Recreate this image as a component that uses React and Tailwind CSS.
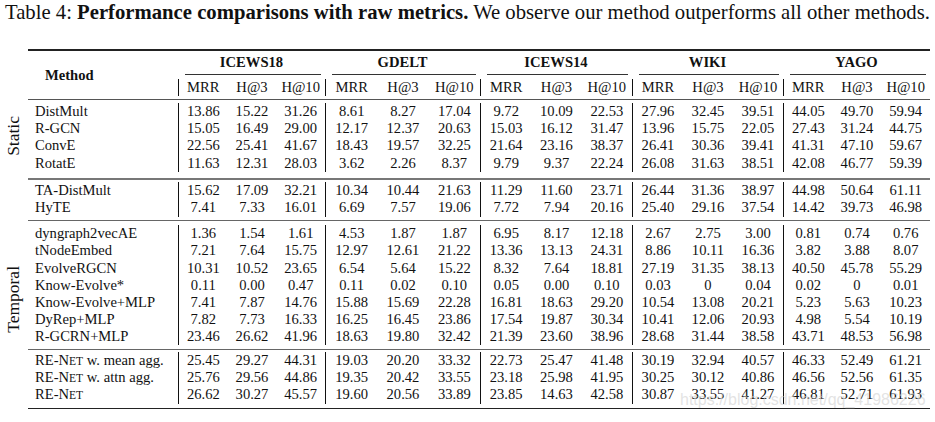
import React from "react"

const groups = [
  { name: "ICEWS18", w: "w-[147px]" },
  { name: "GDELT", w: "w-[155px]" },
  { name: "ICEWS14", w: "w-[152px]" },
  { name: "WIKI", w: "w-[151px]" },
  { name: "YAGO", w: "w-[147px]" },
]

const staticRows = [
  ["DistMult", "13.86 15.22 31.26 8.61 8.27 17.04 9.72 10.09 22.53 27.96 32.45 39.51 44.05 49.70 59.94"],
  ["R-GCN", "15.05 16.49 29.00 12.17 12.37 20.63 15.03 16.12 31.47 13.96 15.75 22.05 27.43 31.24 44.75"],
  ["ConvE", "22.56 25.41 41.67 18.43 19.57 32.25 21.64 23.16 38.37 26.41 30.36 39.41 41.31 47.10 59.67"],
  ["RotatE", "11.63 12.31 28.03 3.62 2.26 8.37 9.79 9.37 22.24 26.08 31.63 38.51 42.08 46.77 59.39"],
]

const taRows = [
  ["TA-DistMult", "15.62 17.09 32.21 10.34 10.44 21.63 11.29 11.60 23.71 26.44 31.36 38.97 44.98 50.64 61.11"],
  ["HyTE", "7.41 7.33 16.01 6.69 7.57 19.06 7.72 7.94 20.16 25.40 29.16 37.54 14.42 39.73 46.98"],
]

const temporalRows = [
  ["dyngraph2vecAE", "1.36 1.54 1.61 4.53 1.87 1.87 6.95 8.17 12.18 2.67 2.75 3.00 0.81 0.74 0.76"],
  ["tNodeEmbed", "7.21 7.64 15.75 12.97 12.61 21.22 13.36 13.13 24.31 8.86 10.11 16.36 3.82 3.88 8.07"],
  ["EvolveRGCN", "10.31 10.52 23.65 6.54 5.64 15.22 8.32 7.64 18.81 27.19 31.35 38.13 40.50 45.78 55.29"],
  ["Know-Evolve*", "0.11 0.00 0.47 0.11 0.02 0.10 0.05 0.00 0.10 0.03 0 0.04 0.02 0 0.01"],
  ["Know-Evolve+MLP", "7.41 7.87 14.76 15.88 15.69 22.28 16.81 18.63 29.20 10.54 13.08 20.21 5.23 5.63 10.23"],
  ["DyRep+MLP", "7.82 7.73 16.33 16.25 16.45 23.86 17.54 19.87 30.34 10.41 12.06 20.93 4.98 5.54 10.19"],
  ["R-GCRN+MLP", "23.46 26.62 41.96 18.63 19.80 32.42 21.39 23.60 38.96 28.68 31.44 38.58 43.71 48.53 56.98"],
]

const ReNet = () => (
  <>
    RE-N<span className="text-[11.5px]">ET</span>
  </>
)

const oursRows = [
  [<><ReNet /> w. mean agg.</>, "25.45 29.27 44.31 19.03 20.20 33.32 22.73 25.47 41.48 30.19 32.94 40.57 46.33 52.49 61.21"],
  [<><ReNet /> w. attn agg.</>, "25.76 29.56 44.86 19.35 20.42 33.55 23.18 25.98 41.95 30.25 30.12 40.86 46.56 52.56 61.35"],
  [<ReNet />, "26.62 30.27 45.57 19.60 20.56 33.89 23.85 14.63 42.58 30.87 33.55 41.27 46.81 52.71 61.93"],
]

function Row({ name, values }) {
  const nums = values.split(" ")
  return (
    <div className="flex h-[17.2px] leading-[17.2px]">
      <div className="w-[150px] pl-[7px] whitespace-nowrap">{name}</div>
      {groups.map((g, gi) => (
        <div key={g.name} className={`${g.w} flex border-l border-[#111]`}>
          {nums.slice(gi * 3, gi * 3 + 3).map((n, i) => (
            <div key={i} className="flex-1 text-center">{n}</div>
          ))}
        </div>
      ))}
    </div>
  )
}

function Section({ rows, className }) {
  return (
    <div className={className}>
      {rows.map((r, i) => (
        <Row key={i} name={r[0]} values={r[1]} />
      ))}
    </div>
  )
}

export default function App() {
  return (
    <div className="w-[935px] h-[422px] bg-white text-[#111] overflow-hidden relative [font-family:'Liberation_Serif','Times_New_Roman',serif]">
      <div className="h-[49px] pl-[5px] pt-[1px] text-[20.7px] leading-[23px] whitespace-nowrap">
        Table 4: <span className="font-bold">Performance comparisons with raw metrics.</span> We observe our method
        outperforms all other methods.
      </div>

      <div className="text-[14.6px]">
        {/* header */}
        <div className="flex">
          <div className="w-[28px]" />
          <div className="w-[902px]">
            <div className="h-[1.5px] bg-[#222]" />
            <div className="flex">
              <div className="w-[150px] pl-[17px] flex items-center font-bold pt-[2px]">Method</div>
              <div>
                <div className="flex h-[24.5px]">
                  {groups.map((g) => (
                    <div key={g.name} className={`${g.w} flex flex-col`}>
                      <div className="flex-1 flex items-center justify-center font-bold pt-[1px]">{g.name}</div>
                      <div className="h-px bg-[#333] ml-[7px] mr-[4px]" />
                    </div>
                  ))}
                </div>
                <div className="pt-[4px] pb-[3px]">
                  <div className="flex h-[17px] leading-[17px]">
                    {groups.map((g) => (
                      <div key={g.name} className={`${g.w} flex border-l border-[#111]`}>
                        <div className="flex-1 text-center">MRR</div>
                        <div className="flex-1 text-center">H@3</div>
                        <div className="flex-1 text-center">H@10</div>
                      </div>
                    ))}
                  </div>
                </div>
              </div>
            </div>
            <div className="h-px bg-[#555]" />
          </div>
        </div>

        {/* static */}
        <div className="flex">
          <div className="w-[28px] flex items-center justify-center pb-[8px]">
            <span className="[writing-mode:vertical-rl] rotate-180 text-[17.5px] leading-none">Static</span>
          </div>
          <div className="w-[902px]">
            <Section rows={staticRows} className="pt-[3px] pb-[6px]" />
            <div className="h-[2px] bg-[#777]" />
          </div>
        </div>

        {/* temporal */}
        <div className="flex">
          <div className="w-[28px] flex items-center justify-center pt-[10px]">
            <span className="[writing-mode:vertical-rl] rotate-180 text-[17.5px] leading-none">Temporal</span>
          </div>
          <div className="w-[902px]">
            <Section rows={taRows} className="pt-[2.5px] pb-[3px]" />
            <div className="h-[1.5px] bg-[#666]" />
            <Section rows={temporalRows} className="pt-[4px] pb-[3.5px]" />
            <div className="h-[1.5px] bg-[#666]" />
            <Section rows={oursRows} className="pt-[1.5px] pb-[4px]" />
            <div className="h-[1.5px] bg-[#222]" />
          </div>
        </div>
      </div>

      <div className="absolute left-[680px] top-[388px] text-[16px] text-[#d0d0d0]/60 [font-family:'Liberation_Sans',sans-serif] whitespace-nowrap">
        https://blog.csdn.net/qq_41986226
      </div>
    </div>
  )
}
